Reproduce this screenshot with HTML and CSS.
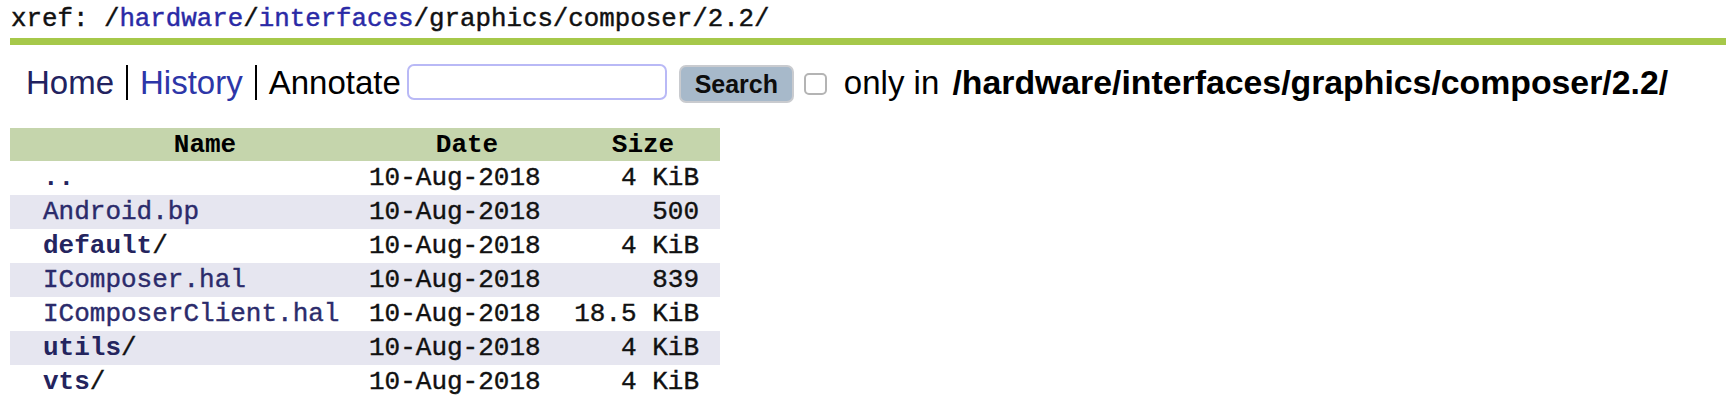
FILE: index.html
```html
<!DOCTYPE html>
<html>
<head>
<meta charset="utf-8">
<title>xref: /hardware/interfaces/graphics/composer/2.2/</title>
<link rel="stylesheet" href="styles.css">
</head>
<body>
<div class="xref">xref: /<a class="plink" href="#">hardware</a>/<a class="plink" href="#">interfaces</a>/graphics/composer/2.2/</div>
<div class="rule"></div>
<div class="bar">
  <a class="menu visited" href="#">Home</a>
  <span class="sep"></span>
  <a class="menu fresh" href="#">History</a>
  <span class="sep"></span>
  <span class="menu plain">Annotate</span>
  <span class="qbox"></span>
  <span class="btn">Search</span>
  <span class="cb"></span>
  <span class="only">only in <b class="path">/hardware/interfaces/graphics/composer/2.2/</b></span>
</div>
<table class="dirlist">
  <colgroup>
    <col class="c-icon"><col class="c-name"><col class="c-date"><col class="c-size">
  </colgroup>
  <thead>
    <tr><th></th><th>Name</th><th>Date</th><th>Size</th></tr>
  </thead>
  <tbody>
    <tr><td></td><td class="name"><a class="dir" href="#">..</a></td><td class="date">10-Aug-2018</td><td class="size">4 KiB</td></tr>
    <tr class="alt"><td></td><td class="name"><a class="file" href="#">Android.bp</a></td><td class="date">10-Aug-2018</td><td class="size">500</td></tr>
    <tr><td></td><td class="name"><a class="dir" href="#">default</a>/</td><td class="date">10-Aug-2018</td><td class="size">4 KiB</td></tr>
    <tr class="alt"><td></td><td class="name"><a class="file" href="#">IComposer.hal</a></td><td class="date">10-Aug-2018</td><td class="size">839</td></tr>
    <tr><td></td><td class="name"><a class="file" href="#">IComposerClient.hal</a></td><td class="date">10-Aug-2018</td><td class="size">18.5 KiB</td></tr>
    <tr class="alt"><td></td><td class="name"><a class="dir" href="#">utils</a>/</td><td class="date">10-Aug-2018</td><td class="size">4 KiB</td></tr>
    <tr><td></td><td class="name"><a class="dir" href="#">vts</a>/</td><td class="date">10-Aug-2018</td><td class="size">4 KiB</td></tr>
  </tbody>
</table>
</body>
</html>
```
FILE: styles.css
```css
html, body {
  margin: 0;
  padding: 0;
  background: #ffffff;
}

body {
  font-family: "Liberation Sans", Arial, sans-serif;
  color: #000;
}

a {
  text-decoration: none;
}

.xref {
  font-family: "Liberation Mono", "Courier New", monospace;
  font-size: 25.8px;
  line-height: 30px;
  padding: 5px 0 0 11px;
  color: #111;
  white-space: nowrap;
  -webkit-text-stroke: 0.45px currentColor;
}

.plink {
  color: #2a2aa6;
}

.rule {
  margin: 3px 0 0 10px;
  height: 7px;
  background: #a6c84a;
}

.bar {
  display: flex;
  align-items: center;
  height: 50px;
  margin-top: 12px;
  padding-left: 26px;
  font-size: 33px;
  line-height: 33px;
  white-space: nowrap;
}

.menu.visited {
  color: #22225f;
}

.menu.fresh {
  color: #2d36a8;
}

.menu.plain {
  color: #000;
}

.sep {
  width: 2px;
  height: 35px;
  background: #000;
  margin: 0 12px 0 12px;
}

.qbox {
  box-sizing: border-box;
  width: 260px;
  height: 36px;
  margin-left: 6px;
  border: 2px solid #b9b9f6;
  border-radius: 7px;
  background: #fff;
}

.btn {
  box-sizing: border-box;
  width: 115px;
  height: 38px;
  margin: 3px 0 0 12px;
  border: 2px solid #c9cbcf;
  border-radius: 7px;
  background: #a7b9ca;
  font-weight: bold;
  font-size: 25px;
  line-height: 34px;
  text-align: center;
  color: #0d0d0d;
}

.cb {
  box-sizing: border-box;
  width: 23px;
  height: 22px;
  margin: 3px 0 0 10px;
  border: 2px solid #b4b4b4;
  border-radius: 5px;
  background: #fff;
}

.only {
  margin-left: 17px;
  color: #000;
}

.path {
  font-size: 33.8px;
  margin-left: 4px;
}

.dirlist {
  margin: 21px 0 0 10px;
  border-collapse: collapse;
  border-spacing: 0;
  table-layout: fixed;
  width: 710px;
  font-family: "Liberation Mono", "Courier New", monospace;
  font-size: 26px;
}

.c-icon { width: 32px; }
.c-name { width: 326px; }
.c-date { width: 198px; }
.c-size { width: 154px; }

.dirlist thead tr {
  height: 33px;
  background: #c5d5ac;
}

.dirlist th {
  padding: 0;
  font-weight: bold;
  text-align: center;
  color: #000;
}

.dirlist tbody tr {
  height: 34px;
}

.dirlist tbody tr.alt {
  background: #e6e6f0;
}

.dirlist td {
  padding: 0;
  white-space: nowrap;
  color: #111;
  -webkit-text-stroke: 0.4px currentColor;
}

.dirlist td.name {
  padding-left: 1px;
}

.dirlist td.date {
  padding-left: 1px;
}

.dirlist td.size {
  text-align: right;
  padding-right: 21px;
}

.dir {
  font-weight: bold;
  color: #24245e;
  -webkit-text-stroke: 0;
}

.file {
  color: #2b2b6b;
}
```
